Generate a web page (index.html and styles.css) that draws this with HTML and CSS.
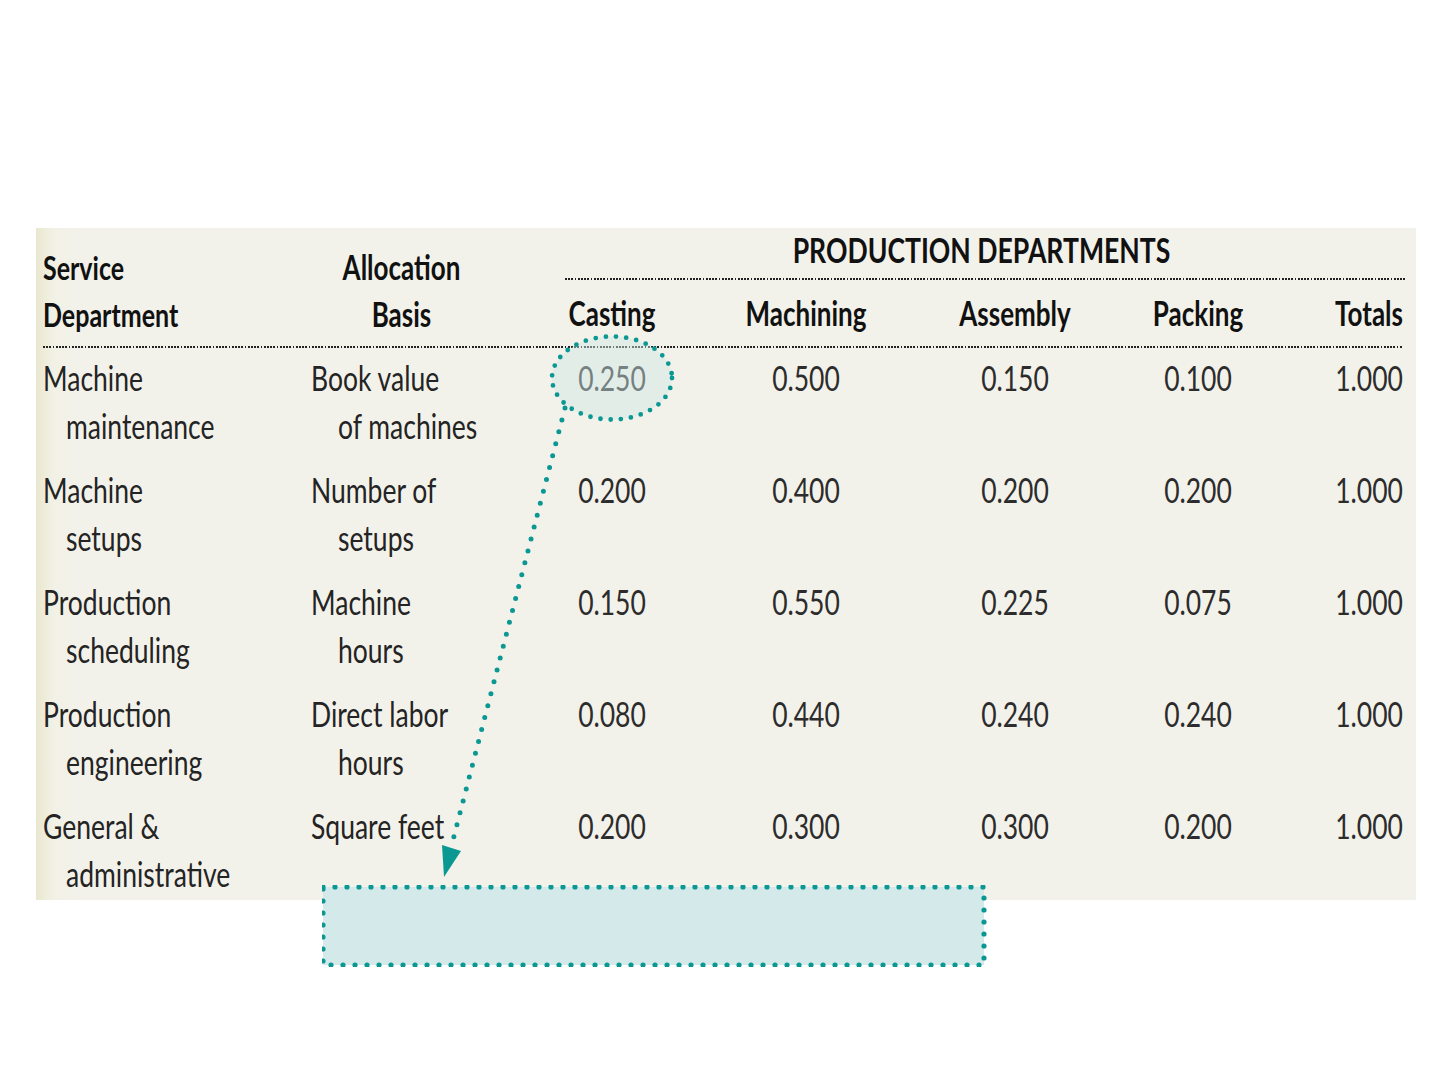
FILE: index.html
```html
<!DOCTYPE html>
<html lang="en">
<head>
<meta charset="utf-8">
<title>Service department allocation ratios</title>
<link rel="stylesheet" href="styles.css">
</head>
<body>
<div class="page">
  <section class="panel">
    <div class="head">
      <div class="h-svc"><span class="ln">Service</span><span class="ln">Department</span></div>
      <div class="h-basis"><span class="ln">Allocation</span><span class="ln">Basis</span></div>
      <div class="h-prod"><span class="ln">PRODUCTION DEPARTMENTS</span><div class="dots dots-prod"></div></div>
      <div class="h-col"><span class="ln">Casting</span></div>
      <div class="h-col"><span class="ln">Machining</span></div>
      <div class="h-col"><span class="ln">Assembly</span></div>
      <div class="h-col"><span class="ln">Packing</span></div>
      <div class="h-col h-tot"><span class="ln">Totals</span></div>
    </div>
    <div class="dots dots-full"></div>
    <div class="rows">
      <div class="c-svc"><span class="ln">Machine</span><span class="ln ind1">maintenance</span></div>
      <div class="c-basis"><span class="ln">Book value</span><span class="ln ind2">of machines</span></div>
      <div class="c-num"><span class="ln">0.250</span></div>
      <div class="c-num"><span class="ln">0.500</span></div>
      <div class="c-num"><span class="ln">0.150</span></div>
      <div class="c-num"><span class="ln">0.100</span></div>
      <div class="c-num c-tot"><span class="ln">1.000</span></div>

      <div class="c-svc"><span class="ln">Machine</span><span class="ln ind1">setups</span></div>
      <div class="c-basis"><span class="ln">Number of</span><span class="ln ind2">setups</span></div>
      <div class="c-num"><span class="ln">0.200</span></div>
      <div class="c-num"><span class="ln">0.400</span></div>
      <div class="c-num"><span class="ln">0.200</span></div>
      <div class="c-num"><span class="ln">0.200</span></div>
      <div class="c-num c-tot"><span class="ln">1.000</span></div>

      <div class="c-svc"><span class="ln">Production</span><span class="ln ind1">scheduling</span></div>
      <div class="c-basis"><span class="ln">Machine</span><span class="ln ind2">hours</span></div>
      <div class="c-num"><span class="ln">0.150</span></div>
      <div class="c-num"><span class="ln">0.550</span></div>
      <div class="c-num"><span class="ln">0.225</span></div>
      <div class="c-num"><span class="ln">0.075</span></div>
      <div class="c-num c-tot"><span class="ln">1.000</span></div>

      <div class="c-svc"><span class="ln">Production</span><span class="ln ind1">engineering</span></div>
      <div class="c-basis"><span class="ln">Direct labor</span><span class="ln ind2">hours</span></div>
      <div class="c-num"><span class="ln">0.080</span></div>
      <div class="c-num"><span class="ln">0.440</span></div>
      <div class="c-num"><span class="ln">0.240</span></div>
      <div class="c-num"><span class="ln">0.240</span></div>
      <div class="c-num c-tot"><span class="ln">1.000</span></div>

      <div class="c-svc"><span class="ln">General &amp;</span><span class="ln ind1">administrative</span></div>
      <div class="c-basis"><span class="ln">Square feet</span></div>
      <div class="c-num"><span class="ln">0.200</span></div>
      <div class="c-num"><span class="ln">0.300</span></div>
      <div class="c-num"><span class="ln">0.300</span></div>
      <div class="c-num"><span class="ln">0.200</span></div>
      <div class="c-num c-tot"><span class="ln">1.000</span></div>
    </div>
  </section>
  <div class="note">
    <svg class="note-frame" width="665" height="82" viewBox="0 0 665 82" aria-hidden="true">
      <rect x="1" y="2" width="661" height="78" fill="#d3e9ea" stroke="#0b9893" stroke-width="5.2" stroke-linecap="round" stroke-dasharray="0 12"/>
    </svg>
  </div>
</div>
<svg class="annot" width="1440" height="1080" viewBox="0 0 1440 1080" aria-hidden="true">
  <ellipse cx="612" cy="378" rx="60" ry="41.5" fill="#cfe6e6" fill-opacity="0.45" stroke="#0b9893" stroke-width="4.8" stroke-linecap="round" stroke-dasharray="0 10.2"/>
  <line x1="565" y1="408" x2="453" y2="840" stroke="#0b9893" stroke-width="5" stroke-linecap="round" stroke-dasharray="0 12.3"/>
  <polygon points="442,845 461,851 444,877" fill="#0b9893"/>
</svg>
</body>
</html>
```

FILE: styles.css
```css
html, body {
  margin: 0;
  padding: 0;
  background: #ffffff;
}

body {
  width: 1440px;
  height: 1080px;
  position: relative;
  overflow: hidden;
  font-family: Lato, "Open Sans", "Liberation Sans", sans-serif;
}

.page {
  padding: 228px 0 0 36px;
}

.panel {
  width: 1380px;
  height: 672px;
  box-sizing: border-box;
  padding: 0 13px 0 7px;
  background:
    linear-gradient(to right, #e9e7cf 0, #eeecd9 8px, #f2f1e6 18px, rgba(243,242,234,0) 40px),
    #f3f2ea;
  color: #1e1e1e;
}

.head,
.rows {
  display: grid;
  grid-template-columns: 268px 229px 144px 244px 174px 192px 109px;
}

.head {
  grid-template-rows: 52px 66px;
  font-weight: 700;
  font-size: 26px;
  color: #111111;
}

.ln {
  display: block;
  transform: scaleY(1.32);
  white-space: nowrap;
}

.h-svc,
.h-basis {
  grid-row: 1 / 3;
  align-self: end;
  padding-bottom: 8px;
  line-height: 47px;
}

.h-svc {
  font-size: 25px;
}

.h-basis {
  text-align: center;
  padding-right: 48px;
}

.h-prod {
  grid-column: 3 / 8;
  grid-row: 1;
  padding-top: 4px;
  line-height: 36px;
  text-align: center;
  font-size: 26.6px;
  padding-left: 20px;
}

.dots {
  height: 2px;
  background: repeating-linear-gradient(to right, #222222 0 1.8px, transparent 1.8px 3.2px);
}

.dots-prod {
  margin: 10px -3px 0 5px;
}

.h-col {
  grid-row: 2;
  padding-top: 10px;
  line-height: 47px;
  text-align: center;
}

.h-tot {
  text-align: right;
}

.rows {
  margin-top: 6px;
  row-gap: 16px;
  font-size: 26.5px;
  line-height: 48px;
  color: #242424;
}

.ind1 {
  padding-left: 23px;
}

.ind2 {
  padding-left: 27px;
}

.c-num {
  text-align: center;
  color: #2c2c2c;
}

.c-tot {
  text-align: right;
}

.note {
  width: 665px;
  height: 82px;
  margin: -15px 0 0 286px;
  position: relative;
}

.note-frame {
  display: block;
}

.annot {
  position: absolute;
  left: 0;
  top: 0;
  pointer-events: none;
}
```
